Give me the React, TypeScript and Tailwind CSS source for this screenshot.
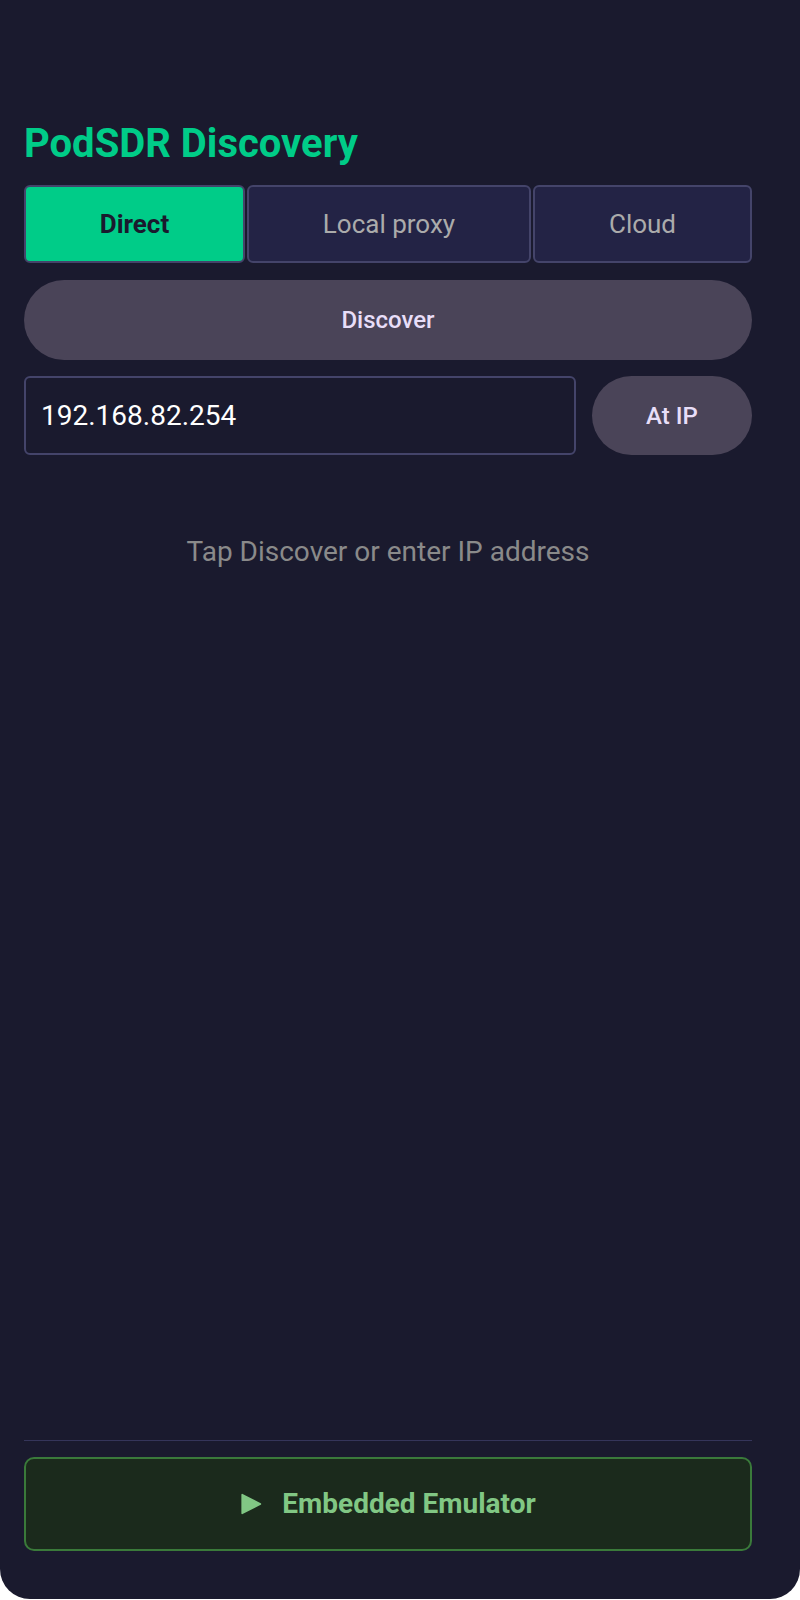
import React from "react";

export default function App() {
  const font = { fontFamily: "Roboto, 'Noto Sans', sans-serif" };
  return (
    <div
      style={font}
      className="w-[800px] h-[1599px] bg-[#1a1a2e] rounded-b-[30px] flex flex-col pl-6 pr-12 pt-[124px] pb-[48px]"
    >
      <h1 className="text-[40px] leading-[40px] font-bold text-[#00cc88] m-0">
        PodSDR Discovery
      </h1>

      <div className="mt-[21px] flex gap-[2px] h-[78px]">
        <div className="w-[221px] h-full flex items-center justify-center rounded-[6px] border-2 border-[#44446a] bg-[#00cc88] text-[#1a1a2e] text-[26px] font-bold">
          Direct
        </div>
        <div className="flex-1 h-full flex items-center justify-center rounded-[6px] border-2 border-[#44446a] bg-[#232345] text-[#ababab] text-[26px]">
          Local proxy
        </div>
        <div className="w-[219px] h-full flex items-center justify-center rounded-[6px] border-2 border-[#44446a] bg-[#232345] text-[#ababab] text-[26px]">
          Cloud
        </div>
      </div>

      <div className="mt-[17px] h-[80px] rounded-full bg-[#4a4458] flex items-center justify-center text-[#e8def8] text-[24px] font-medium">
        Discover
      </div>

      <div className="mt-[16px] flex gap-4 h-[79px]">
        <div className="flex-1 h-full rounded-[6px] border-2 border-[#44446a] flex items-center pl-[15px] text-white text-[28px]">
          192.168.82.254
        </div>
        <div className="w-[160px] h-full rounded-full bg-[#4a4458] flex items-center justify-center text-[#e8def8] text-[24px] font-medium">
          At IP
        </div>
      </div>

      <p className="mt-[83px] text-center text-[28px] leading-[28px] text-[#8a8a8a]">
        Tap Discover or enter IP address
      </p>

      <div className="flex-1" />

      <div className="h-px bg-[#35355a]" />

      <div className="mt-[16px] h-[94px] rounded-[10px] border-2 border-[#3a7a3a] bg-[#1b2a1c] flex items-center justify-center gap-[20px] text-[#81c784] text-[28px] font-bold">
        <svg width="22" height="22" viewBox="0 0 20 20" className="shrink-0">
          <path d="M2 1.5 L18.5 10 L2 18.5 Z" fill="#81c784" stroke="#81c784" strokeWidth="1.5" strokeLinejoin="round" />
        </svg>
        <span>Embedded Emulator</span>
      </div>
    </div>
  );
}
